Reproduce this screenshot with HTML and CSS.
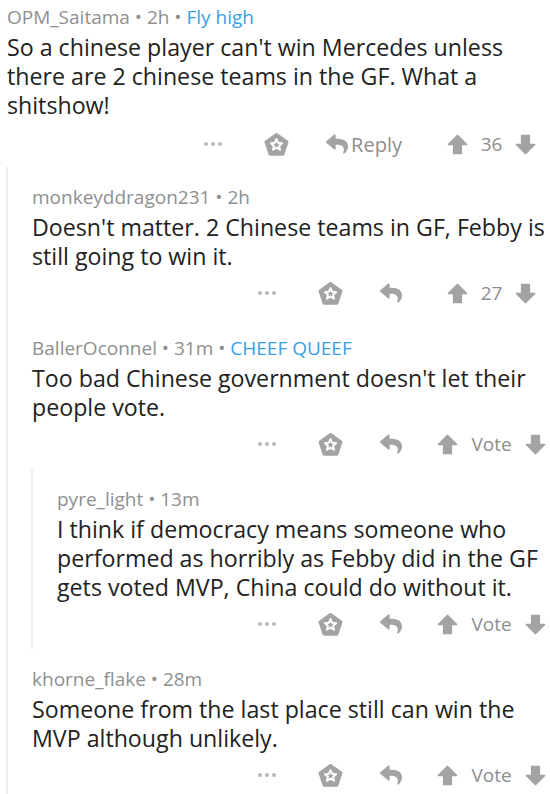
FILE: index.html
```html
<!DOCTYPE html>
<html>
<head>
<meta charset="utf-8">
<link rel="stylesheet" href="styles.css">
</head>
<body>
<svg width="0" height="0" class="defs">
  <defs>
    <symbol id="i-save" viewBox="0 0 24 24">
      <path d="M12 2.4 L22 9.6 L18.2 21.2 L5.8 21.2 L2 9.6 Z" fill="currentColor" stroke="currentColor" stroke-width="3" stroke-linejoin="round"/>
      <path d="M12 6.8 L13.6 10.4 L17.4 10.7 L14.5 13.3 L15.4 17 L12 15 L8.6 17 L9.5 13.3 L6.6 10.7 L10.4 10.4 Z" fill="none" stroke="#fff" stroke-width="1.9" stroke-linejoin="round"/>
    </symbol>
    <symbol id="i-reply" viewBox="0 0 512 512">
      <path d="M8.309 189.836L184.313 37.851C199.719 24.546 224 35.347 224 56.015v80.053c160.629 1.839 288 34.032 288 186.258 0 61.441-39.581 122.309-83.333 154.132-13.653 9.931-33.111-2.533-28.077-18.631 45.344-145.012-21.507-183.51-176.59-185.742V360c0 20.7-24.3 31.453-39.687 18.164l-176.004-152c-11.071-9.562-11.086-26.753 0-36.328z" fill="currentColor"/>
    </symbol>
    <symbol id="i-up" viewBox="0 0 20 20">
      <path d="M10 1.2 L18.8 10 H13.8 V18.8 H6.2 V10 H1.2 Z" fill="currentColor" stroke="currentColor" stroke-width="1.2" stroke-linejoin="round"/>
    </symbol>
    <symbol id="i-down" viewBox="0 0 20 20">
      <path d="M10 18.8 L18.8 10 H13.8 V1.2 H6.2 V10 H1.2 Z" fill="currentColor" stroke="currentColor" stroke-width="1.2" stroke-linejoin="round"/>
    </symbol>
  </defs>
</svg>

<div class="comment top">
  <div class="meta">OPM_Saitama • 2h • <span class="flair">Fly high</span></div>
  <div class="body">So a chinese player can't win Mercedes unless there are 2 chinese teams in the GF. What a shitshow!</div>
  <div class="actions">
    <span class="dots"><i></i><i></i><i></i></span>
    <svg class="ic save"><use href="#i-save"/></svg>
    <span class="reply"><svg class="ic rep"><use href="#i-reply"/></svg><span class="reply-label">Reply</span></span>
    <span class="vote"><svg class="ic arrow"><use href="#i-up"/></svg><span class="score">36</span><svg class="ic arrow"><use href="#i-down"/></svg></span>
  </div>

  <div class="children">
    <div class="comment">
      <div class="meta">monkeyddragon231 • 2h</div>
      <div class="body">Doesn't matter. 2 Chinese teams in GF, Febby is still going to win it.</div>
      <div class="actions">
        <span class="dots"><i></i><i></i><i></i></span>
        <svg class="ic save"><use href="#i-save"/></svg>
        <span class="reply"><svg class="ic rep"><use href="#i-reply"/></svg></span>
        <span class="vote"><svg class="ic arrow"><use href="#i-up"/></svg><span class="score">27</span><svg class="ic arrow"><use href="#i-down"/></svg></span>
      </div>
    </div>

    <div class="comment">
      <div class="meta">BallerOconnel • 31m • <span class="flair">CHEEF QUEEF</span></div>
      <div class="body">Too bad Chinese government doesn't let their people vote.</div>
      <div class="actions">
        <span class="dots"><i></i><i></i><i></i></span>
        <svg class="ic save"><use href="#i-save"/></svg>
        <span class="reply"><svg class="ic rep"><use href="#i-reply"/></svg></span>
        <span class="vote"><svg class="ic arrow"><use href="#i-up"/></svg><span class="score">Vote</span><svg class="ic arrow"><use href="#i-down"/></svg></span>
      </div>

      <div class="children">
        <div class="comment">
          <div class="meta">pyre_light • 13m</div>
          <div class="body">I think if democracy means someone who performed as horribly as Febby did in the GF gets voted MVP, China could do without it.</div>
          <div class="actions">
            <span class="dots"><i></i><i></i><i></i></span>
            <svg class="ic save"><use href="#i-save"/></svg>
            <span class="reply"><svg class="ic rep"><use href="#i-reply"/></svg></span>
            <span class="vote"><svg class="ic arrow"><use href="#i-up"/></svg><span class="score">Vote</span><svg class="ic arrow"><use href="#i-down"/></svg></span>
          </div>
        </div>
      </div>
    </div>

    <div class="comment">
      <div class="meta">khorne_flake • 28m</div>
      <div class="body">Someone from the last place still can win the MVP although unlikely.</div>
      <div class="actions">
        <span class="dots"><i></i><i></i><i></i></span>
        <svg class="ic save"><use href="#i-save"/></svg>
        <span class="reply"><svg class="ic rep"><use href="#i-reply"/></svg></span>
        <span class="vote"><svg class="ic arrow"><use href="#i-up"/></svg><span class="score">Vote</span><svg class="ic arrow"><use href="#i-down"/></svg></span>
      </div>
    </div>
  </div>
</div>
</body>
</html>
```

FILE: styles.css
```css
html, body {
  margin: 0;
  padding: 0;
  background: #fff;
}
body {
  font-family: "Open Sans", "Noto Sans", sans-serif;
  color: #222;
  overflow: hidden;
  height: 794px;
}
.defs {
  position: absolute;
  width: 0;
  height: 0;
}
.comment {
  display: flex;
  flex-direction: column;
  padding: 17px 0 0 0;
}
.comment.top {
  padding: 4px 0 0 7px;
}
.meta {
  font-size: 19px;
  line-height: 26px;
  color: #8f8f8f;
}
.flair {
  color: #3a9ee4;
}
.body {
  font-size: 23.2px;
  line-height: 29px;
  margin-top: 3px;
}
.actions {
  display: flex;
  align-items: center;
  justify-content: flex-end;
  height: 30px;
  margin-top: 7px;
  margin-bottom: 10px;
  color: #a3a3a3;
}
.top > .actions {
  margin-top: 9px;
  margin-bottom: 8px;
}
.dots {
  display: flex;
  gap: 3px;
  margin-right: 42px;
}
.dots i {
  width: 4px;
  height: 4px;
  border-radius: 50%;
  background: #b8b8b8;
}
.ic {
  display: block;
}
.save {
  width: 25px;
  height: 25px;
  margin-right: 37px;
}
.reply {
  display: flex;
  align-items: center;
  gap: 3px;
}
.rep {
  width: 22px;
  height: 22px;
}
.reply-label {
  font-size: 20px;
  color: #8e8e8e;
}
.vote {
  width: 117px;
  margin-left: 31px;
  display: flex;
  align-items: center;
  justify-content: center;
  gap: 13px;
}
.arrow {
  width: 21px;
  height: 21px;
}
.score {
  font-size: 19px;
  color: #8e8e8e;
}
.children {
  border-left: 2px solid #ededed;
  margin-left: -1px;
  padding-left: 24px;
}
```
